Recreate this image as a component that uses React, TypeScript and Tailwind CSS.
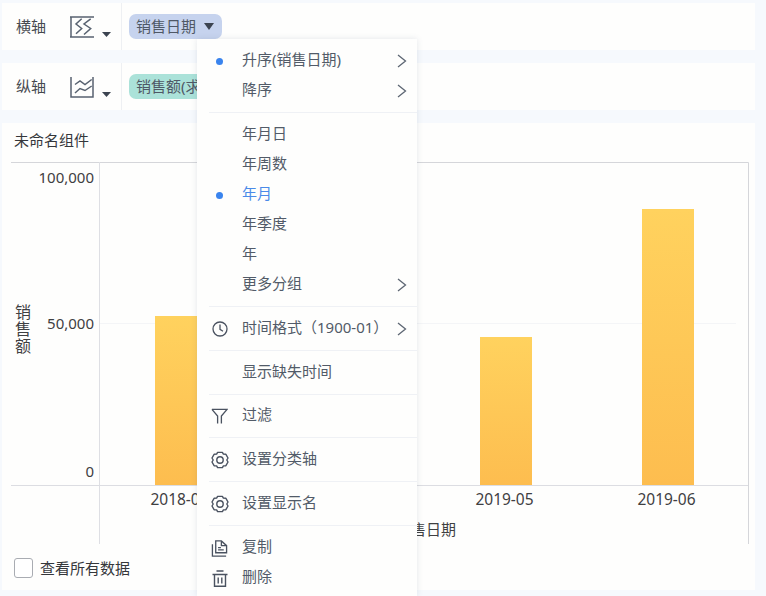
import React from "react";

const Chevron = () => (
  <svg width="12" height="16" viewBox="0 0 12 16" fill="none" stroke="#5d6673" strokeWidth="1.3">
    <path d="M2 2 L9.5 8 L2 14" />
  </svg>
);

const Caret = ({ className, w = 9, h = 5 }: { className: string; w?: number; h?: number }) => (
  <svg width={w} height={h} viewBox="0 0 11 6" preserveAspectRatio="none" className={className}>
    <path d="M0 0 H11 L5.5 6 Z" fill="#3c4450" />
  </svg>
);

const ClockIcon = () => (
  <svg width="16" height="16" viewBox="0 0 16 16" fill="none" stroke="#4a5260" strokeWidth="1.3">
    <circle cx="8" cy="8" r="7" />
    <path d="M8 3.6 V8.4 L11 10.2" />
  </svg>
);

const FilterIcon = () => (
  <svg width="17" height="17" viewBox="0 0 18 18" fill="none" stroke="#4a5260" strokeWidth="1.4">
    <path d="M1 1.5 H17 L11 8.5 V16.5 M7 16.5 V8.5 L1 1.5" />
  </svg>
);

const GearIcon = () => (
  <svg width="18" height="18" viewBox="0 0 18 18" fill="none" stroke="#4a5260" strokeWidth="1.4">
    <path d="M6.6 1.4 L11.4 1.4 L12.4 3.1 L14.9 3.3 L17 7 L15.8 9 L17 11 L14.9 14.7 L12.4 14.9 L11.4 16.6 L6.6 16.6 L5.6 14.9 L3.1 14.7 L1 11 L2.2 9 L1 7 L3.1 3.3 L5.6 3.1 Z" strokeLinejoin="round" />
    <circle cx="9" cy="9" r="3.2" />
  </svg>
);

const CopyIcon = () => (
  <svg width="17" height="17" viewBox="0 0 17 18" fill="none" stroke="#4a5260" strokeWidth="1.4">
    <path d="M4.5 13.5 V1 H10.5 L16 6 V13.5 Z" />
    <path d="M10.5 1 V6 H16" />
    <path d="M1 4.5 V17 H15.5" />
    <path d="M7 8 H10 M7 10.5 H13" />
  </svg>
);

const TrashIcon = () => (
  <svg width="16" height="17" viewBox="0 0 16 17" fill="none" stroke="#4a5260" strokeWidth="1.4">
    <path d="M4.5 1 H11.5 M0.5 4.5 H15.5 M2.5 4.5 V16.3 H13.5 V4.5 M6.2 7.5 V13.5 M9.8 7.5 V13.5" />
  </svg>
);

const AxisXIcon = () => (
  <svg width="26" height="24" viewBox="0 0 26 24" fill="none" stroke="#586270" strokeWidth="1.5">
    <path d="M1 2 V22 M0 2 H24 M0 22 H24" />
    <path d="M11.7 3.8 L6 9 L11.7 13.5 L6 18.8" />
    <path d="M20.7 3.8 L14 9 L20.7 13.5 L14 19.5" />
  </svg>
);

const AxisYIcon = () => (
  <svg width="26" height="24" viewBox="0 0 26 24" fill="none" stroke="#586270" strokeWidth="1.5">
    <path d="M1 2 V22 H23 V2" />
    <path d="M5 9.5 L10 6 L15 9.5 L21.7 4.5" />
    <path d="M5 18 L10 13.5 L15 15.5 L21.7 11" />
  </svg>
);

function AxisBar({ label, icon, pill, pillClass }: { label: string; icon: React.ReactNode; pill: React.ReactNode; pillClass: string }) {
  return (
    <div className="flex h-[47px] bg-[#fefefd]">
      <div className="flex w-[119px] items-center pl-[14px]">
        <span className="w-[54px] text-[#46494f]">{label}</span>
        <span className="flex items-center">{icon}</span>
        <Caret className="ml-[6px] mt-[15px]" />
      </div>
      <div className="w-px bg-[#eef0f3]" />
      <div className="pl-[7px] pt-[11px]">
        <div className={`flex h-[25px] items-center rounded-[7px] pl-[7px] text-[#4f5866] ${pillClass}`}>{pill}</div>
      </div>
    </div>
  );
}

function MenuItem({ text, icon, dot, arrow, active }: { text: string; icon?: React.ReactNode; dot?: boolean; arrow?: boolean; active?: boolean }) {
  return (
    <div className="flex h-[30px] items-center">
      <div className="flex w-[45px] shrink-0 items-center justify-center pt-[4px]">
        {dot ? <span className="h-[7px] w-[7px] rounded-full bg-[#3a84ee]" /> : icon}
      </div>
      <span className={`flex-1 ${active ? "text-[#4a8ae8]" : "text-[#525b68]"}`}>{text}</span>
      {arrow ? <span className="mr-[9px] flex pt-[4px]"><Chevron /></span> : null}
    </div>
  );
}

const Divider = ({ className = "mt-[8px] mb-[5px]" }: { className?: string }) => (
  <div className={`ml-[12px] h-px bg-[#eff1f5] ${className}`} />
);

function DropdownMenu() {
  return (
    <div className="absolute left-[197px] top-[39px] h-[557px] w-[220px] bg-[#fefefd] pt-[5px] shadow-[0_0_6px_rgba(90,100,130,0.16)]">
      <MenuItem text="升序(销售日期)" dot arrow />
      <MenuItem text="降序" arrow />
      <Divider />
      <MenuItem text="年月日" />
      <MenuItem text="年周数" />
      <MenuItem text="年月" dot active />
      <MenuItem text="年季度" />
      <MenuItem text="年" />
      <MenuItem text="更多分组" arrow />
      <Divider />
      <MenuItem text="时间格式（1900-01）" icon={<ClockIcon />} arrow />
      <Divider />
      <MenuItem text="显示缺失时间" />
      <Divider className="mt-[8px] mb-[4px]" />
      <MenuItem text="过滤" icon={<FilterIcon />} />
      <Divider />
      <MenuItem text="设置分类轴" icon={<GearIcon />} />
      <Divider />
      <MenuItem text="设置显示名" icon={<GearIcon />} />
      <Divider />
      <MenuItem text="复制" icon={<CopyIcon />} />
      <MenuItem text="删除" icon={<TrashIcon />} />
    </div>
  );
}

const bars = [
  { x: 153, top: 154 },
  { x: 478, top: 175 },
  { x: 640, top: 47 },
];

function SalesChart() {
  // 坐标原点是面板左上角向下 39px
  return (
    <svg width="753" height="382" viewBox="0 0 753 382" className="block" fontSize="15" fill="#3f4042">
      <defs>
        <linearGradient id="barFill" x1="0" y1="0" x2="0" y2="1">
          <stop offset="0" stopColor="#ffd25e" />
          <stop offset="1" stopColor="#fdbd4f" />
        </linearGradient>
      </defs>
      <path d="M9 0.5 H746.5 V382" fill="none" stroke="#d5d6da" />
      <path d="M97.5 0 V382" stroke="#dedfe4" />
      <path d="M98 161.5 H734" stroke="#f4f5f7" />
      {bars.map((b) => (
        <rect key={b.x} x={b.x} y={b.top} width="52" height={323 - b.top} fill="url(#barFill)" />
      ))}
      <path d="M9 323.5 H746" stroke="#dcdde2" />
      <text x="92" y="21" textAnchor="end">100,000</text>
      <text x="92" y="167" textAnchor="end">50,000</text>
      <text x="92" y="315" textAnchor="end">0</text>
      <text x="20" y="142" fontSize="16" letterSpacing="1" writingMode="vertical-rl">销售额</text>
      <text x="177.5" y="343" fontSize="15.5" textAnchor="middle">2018-04</text>
      <text x="502.5" y="343" fontSize="15.5" textAnchor="middle">2019-05</text>
      <text x="664.5" y="343" fontSize="15.5" textAnchor="middle">2019-06</text>
      <text x="424" y="373" textAnchor="middle">销售日期</text>
    </svg>
  );
}

export default function App() {
  return (
    <div className="relative h-[596px] w-[766px] overflow-hidden bg-[#f6f9fd] pl-[2px] font-['Noto_Sans','Noto_Sans_CJK_SC',sans-serif] text-[15px]">
      <div className="flex h-full w-[753px] flex-col gap-[13px] pt-[3px]">
        <AxisBar
          label="横轴"
          icon={<AxisXIcon />}
          pillClass="w-[93px] bg-[#c6d3ee]"
          pill={
            <>
              <span>销售日期</span>
              <Caret className="ml-[8px]" w={10} h={7} />
            </>
          }
        />
        <AxisBar
          label="纵轴"
          icon={<AxisYIcon />}
          pillClass="w-[93px] bg-[#abe2d9]"
          pill={<span className="whitespace-nowrap">销售额(求和)</span>}
        />
        <div className="flex h-[467px] flex-col bg-[#fefefd]">
          <div className="flex h-[39px] items-center pb-[4px] pl-[12px] text-[#35373b]">未命名组件</div>
          <SalesChart />
          <div className="flex flex-1 items-center pl-[12px] pt-[2px]">
            <span className="h-[20px] w-[19px] rounded-[3px] border border-[#a9acb2] bg-white" />
            <span className="ml-[7px] text-[#35373b]">查看所有数据</span>
          </div>
        </div>
      </div>
      <DropdownMenu />
    </div>
  );
}
